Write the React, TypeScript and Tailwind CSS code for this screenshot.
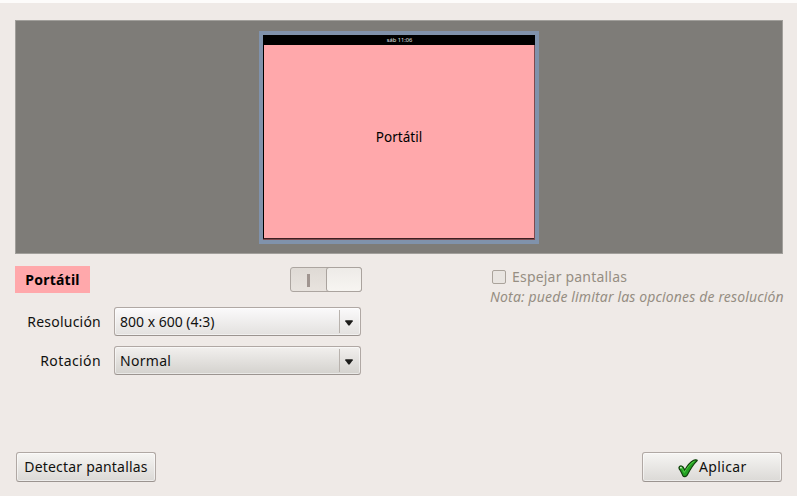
import React from "react";

function Combo({ value, className, textClass }: { value: string; className: string; textClass: string }) {
  return (
    <button className={`flex h-[29px] w-[247px] shrink-0 items-center rounded-[3px] border border-[#b0a8a4] border-b-[#9b9490] pl-[5px] shadow-[inset_0_0_0_1px_rgba(255,255,255,0.5)] ${className}`}>
      <span className={`grow whitespace-nowrap text-left ${textClass}`}>{value}</span>
      <span className="flex h-[23px] w-[21px] items-center justify-center border-l border-[#b8b2ad] pr-[3px] pt-[3px]">
        <svg width="8" height="6" viewBox="0 0 8 6">
          <path d="M0.3 0.3h7.4v1L4.6 5.4H3.4L0.3 1.3z" fill="#1c1c1a" />
        </svg>
      </span>
    </button>
  );
}

export default function App() {
  return (
    <div className="flex h-[496px] w-[797px] flex-col overflow-hidden border-t-[3px] border-[#fdfcfb] bg-[#efeae7] px-[15px] pt-[17px] font-['Noto_Sans','Open_Sans',sans-serif] text-[14px] leading-[20px] text-[#11110f]">
      <div className="flex h-[234px] w-[768px] shrink-0 justify-center border border-[#a19f9b] bg-[#7e7c78] pt-[10px]">
        <div className="flex h-[213px] w-[280px] flex-col border-4 border-[#8092ab] bg-[#7e4b4f]">
          <div className="flex h-[10px] w-full shrink-0 items-center justify-center bg-black pl-px text-[5.7px] leading-[10px] text-[#e4e4e4]">
            <span>sáb 11:06</span>
          </div>
          <div className="mr-px flex h-[194px] items-center justify-center border-b border-l border-b-[#3c2022] border-l-black bg-[#ffa8ab] pb-[10px]">
            <span className="text-[13.5px] tracking-[0.02px] text-black">Portátil</span>
          </div>
        </div>
      </div>

      <div className="mt-[12px] flex">
        <div className="w-[347px] shrink-0">
          <div className="flex items-start justify-between">
            <div className="flex h-[27px] w-[75px] items-center justify-center bg-[#ffa8ab] font-bold text-black">
              <span className="text-[14px] tracking-[0.25px]">Portátil</span>
            </div>
            <div className="mt-[1px] flex h-[25px] w-[72px] rounded-[3px] border border-[#aca5a0] bg-linear-to-b from-[#dfdad5] to-[#e8e3de]">
              <div className="flex grow items-center justify-center pr-px pt-px">
                <div className="h-[13px] w-[3px] bg-[#a09590]" />
              </div>
              <div className="-my-px -mr-px h-[25px] w-[36px] rounded-[3px] border border-[#aaa39e] bg-linear-to-b from-[#eeebe8] to-[#f7f5f1]" />
            </div>
          </div>
          <div className="mt-[14px] mr-px flex items-center justify-end gap-[13px]">
            <span className="tracking-[0.22px]">Resolución</span>
            <Combo value="800 x 600 (4:3)" className="bg-linear-to-b from-[#fbfafb] to-[#e3e1df]" textClass="" />
          </div>
          <div className="mt-[10px] mr-px flex items-center justify-end gap-[13px]">
            <span className="tracking-[0.4px]">Rotación</span>
            <Combo value="Normal" className="bg-linear-to-b from-[#f2f0ee] to-[#d4d2ce]" textClass="tracking-[0.3px]" />
          </div>
        </div>
        <div className="ml-[128px] shrink-0 pt-px text-[#968e83]">
          <div className="flex h-[20px] items-center">
            <span className="ml-[2px] h-[14px] w-[14px] rounded-[2px] border border-[#aaa39b] bg-[#e9e5e1]" />
            <span className="ml-[6px] whitespace-nowrap tracking-[0.2px]">Espejar pantallas</span>
          </div>
          <div className="whitespace-nowrap italic">
            <span className="tracking-[0.15px]">Nota: puede limitar las opciones de resolución</span>
          </div>
        </div>
      </div>

      <div className="mt-[77px] flex justify-between pl-px pr-0">
        <button className="flex h-[30px] w-[140px] items-center justify-center whitespace-nowrap rounded-[3px] border border-[#b0a8a4] border-b-[#9b9490] bg-linear-to-b from-[#f6f5f3] to-[#dbd9d6] shadow-[inset_0_0_0_1px_rgba(255,255,255,0.5)]">
          <span className="tracking-[0.2px]">Detectar pantallas</span>
        </button>
        <button className="flex h-[30px] w-[140px] items-center rounded-[3px] border border-[#b0a8a4] border-b-[#9b9490] bg-linear-to-b from-[#f6f5f3] to-[#dbd9d6] pl-[35px] shadow-[inset_0_0_0_1px_rgba(255,255,255,0.5)]">
          <svg className="mt-[2px]" width="20" height="19" viewBox="0 0 20 19">
            <path d="M1 8.3C2.2 6.1 4.8 6.8 5.7 9L6.9 11.3C9.2 6.5 12.5 2.8 15.6 1.2c1.5-.7 3.7-.4 3.6.4C15.2 5.4 12 10.7 9.3 16c-.9 1.9-3.5 2.1-4.5.6C3.6 14.2 3 11.7 1.2 9.8z" fill="#22a222" stroke="#103d0b" strokeWidth="1.2" strokeLinejoin="round" />
            <path d="M2.7 8.5c1.4.2 2.2 2.3 3.6 5C9 9 12 4.4 16.5 2.2" fill="none" stroke="#55c845" strokeWidth="1" />
            <circle cx="2.9" cy="8.6" r="0.9" fill="#d9f5d2" />
          </svg>
          <span className="ml-px tracking-[0.35px]">Aplicar</span>
        </button>
      </div>
    </div>
  );
}
